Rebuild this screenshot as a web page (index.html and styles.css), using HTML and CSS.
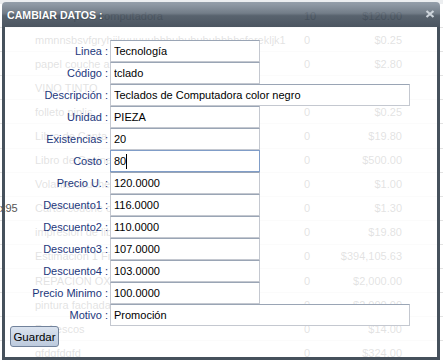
FILE: index.html
```html
<!DOCTYPE html>
<html lang="es">
<head>
<meta charset="utf-8">
<title>Cambiar datos</title>
<link rel="stylesheet" href="styles.css">
</head>
<body>
<div class="sheet">
  <div class="sheet-row"><span></span><span>teclado para computadora</span><span>10</span><span class="price">$120.00</span></div>
  <div class="sheet-row"><span></span><span>mmnnsbsvfgryhjjkuuuuubbbububububbbbsferekljk1</span><span>0</span><span class="price">$0.25</span></div>
  <div class="sheet-row"><span></span><span>papel couche a</span><span>0</span><span class="price">$2.80</span></div>
  <div class="sheet-row"><span></span><span>VINO TINTO</span><span></span><span class="price"></span></div>
  <div class="sheet-row"><span></span><span>folleto piplis</span><span>0</span><span class="price">$0.25</span></div>
  <div class="sheet-row"><span></span><span>Libro de Conta</span><span>0</span><span class="price">$19.80</span></div>
  <div class="sheet-row"><span></span><span>Libro de Cocina</span><span>0</span><span class="price">$500.00</span></div>
  <div class="sheet-row"><span></span><span>Volante couche</span><span>0</span><span class="price">$1.00</span></div>
  <div class="sheet-row"><span></span><span>Cartel couche carta</span><span>0</span><span class="price">$1.30</span></div>
  <div class="sheet-row"><span></span><span>impresión de libros</span><span>0</span><span class="price">$19.80</span></div>
  <div class="sheet-row"><span></span><span>Estimación 1 Final</span><span>0</span><span class="price">$394,105.63</span></div>
  <div class="sheet-row"><span></span><span>REPACION OXIMETRO</span><span>0</span><span class="price">$2,000.00</span></div>
  <div class="sheet-row"><span></span><span>pintura fachada</span><span>0</span><span class="price">$2,000.00</span></div>
  <div class="sheet-row"><span></span><span>Refrescos</span><span>0</span><span class="price">$14.00</span></div>
  <div class="sheet-row"><span></span><span>gfdgfdgfd</span><span>0</span><span class="price">$324.00</span></div>
</div>

<span class="stray">x95</span>

<div class="dialog">
  <div class="titlebar">
    <span class="title">CAMBIAR DATOS :</span>
    <svg class="close" width="10" height="8" viewBox="0 0 10 8" aria-hidden="true">
      <path d="M1.5 1 L8.5 7 M8.5 1 L1.5 7" stroke="#cdd4db" stroke-width="2.2" fill="none"/>
    </svg>
  </div>
  <div class="content">
    <form class="form">
      <div class="row"><label class="label">Linea :</label><input class="field" value="Tecnología"></div>
      <div class="row"><label class="label">Código :</label><input class="field" value="tclado"></div>
      <div class="row"><label class="label">Descripción :</label><input class="field field-wide" value="Teclados de Computadora color negro"></div>
      <div class="row"><label class="label">Unidad :</label><input class="field" value="PIEZA"></div>
      <div class="row"><label class="label">Existencias :</label><input class="field" value="20"></div>
      <div class="row"><label class="label">Costo :</label><span class="field-wrap"><input class="field is-active" value="80"><span class="caret"></span></span></div>
      <div class="row"><label class="label">Precio U. :</label><input class="field" value="120.0000"></div>
      <div class="row"><label class="label">Descuento1 :</label><input class="field" value="116.0000"></div>
      <div class="row"><label class="label">Descuento2 :</label><input class="field" value="110.0000"></div>
      <div class="row"><label class="label">Descuento3 :</label><input class="field" value="107.0000"></div>
      <div class="row"><label class="label">Descuento4 :</label><input class="field" value="103.0000"></div>
      <div class="row"><label class="label">Precio Minimo :</label><input class="field" value="100.0000"></div>
      <div class="row"><label class="label">Motivo :</label><input class="field field-wide" value="Promoción"></div>
      <button type="button" class="save">Guardar</button>
    </form>
  </div>
</div>
</body>
</html>
```
FILE: styles.css
```css
html, body {
  margin: 0;
  padding: 0;
}
body {
  width: 443px;
  height: 364px;
  overflow: hidden;
  position: relative;
  background: #eceef0;
  font-family: "Liberation Sans", Arial, sans-serif;
  font-size: 11px;
  color: #333;
}

/* underlying table */
.sheet {
  padding-top: 4px;
  display: flex;
  flex-direction: column;
}
.sheet-row {
  display: grid;
  grid-template-columns: 35px 269px 26px 72px;
  height: 24.1px;
  align-items: center;
  box-sizing: border-box;
  border-bottom: 1px solid #e2e2e2;
  white-space: nowrap;
  background: #fff;
}
.price {
  text-align: right;
}
.stray {
  position: absolute;
  left: 0;
  top: 202px;
  color: #555;
  font-size: 11px;
  z-index: 2;
}

/* dialog overlay */
.dialog {
  position: absolute;
  left: 2px;
  top: 2px;
  width: 438px;
  height: 358px;
  display: flex;
  flex-direction: column;
}
.titlebar {
  height: 25px;
  flex: none;
  border-radius: 4px 4px 0 0;
  background: linear-gradient(rgba(142,153,165,0.93), rgba(104,115,127,0.93) 45%, rgba(76,87,99,0.93) 55%, rgba(62,73,85,0.93));
  display: flex;
  align-items: center;
  justify-content: space-between;
  padding: 0 5px 0 5px;
}
.title {
  color: #fff;
  font-weight: bold;
  font-size: 10.6px;
  text-shadow: 0 0 1px rgba(40,50,60,0.5);
  margin-top: 1px;
}
.close {
  display: block;
  margin-top: -2px;
}
.content {
  flex: 1;
  box-sizing: border-box;
  border: 3px solid #46515c;
  border-top: 0;
  background: rgba(255,255,255,0.86);
  padding: 13px 0 0 5px;
}
.form {
  margin: 0;
  display: flex;
  flex-direction: column;
  align-items: flex-start;
}
.row {
  display: flex;
  align-items: center;
  height: 22px;
}
.label {
  width: 100px;
  box-sizing: border-box;
  padding-right: 2px;
  text-align: right;
  color: #1d377c;
  white-space: nowrap;
}
.field {
  width: 150px;
  height: 22px;
  box-sizing: border-box;
  margin: 0;
  padding: 0 3px;
  border: 1px solid #c4c8d0;
  border-top-color: #9aa5b5;
  background: #fff;
  font-family: "Liberation Sans", Arial, sans-serif;
  font-size: 11px;
  color: #000;
  outline: none;
}
.field-wide {
  width: 300px;
}
.field.is-active {
  border-color: #809dc8;
}
.field-wrap {
  position: relative;
  display: block;
}
.caret {
  position: absolute;
  left: 16px;
  top: 4px;
  width: 1px;
  height: 15px;
  background: #000;
}
.save {
  width: 49px;
  height: 21px;
  margin: 0;
  padding: 0;
  border: 1px solid #71829b;
  border-radius: 3px;
  background: linear-gradient(#dbe3ef, #bccadd);
  font-family: "Liberation Sans", Arial, sans-serif;
  font-size: 11.5px;
  color: #000;
}
```
